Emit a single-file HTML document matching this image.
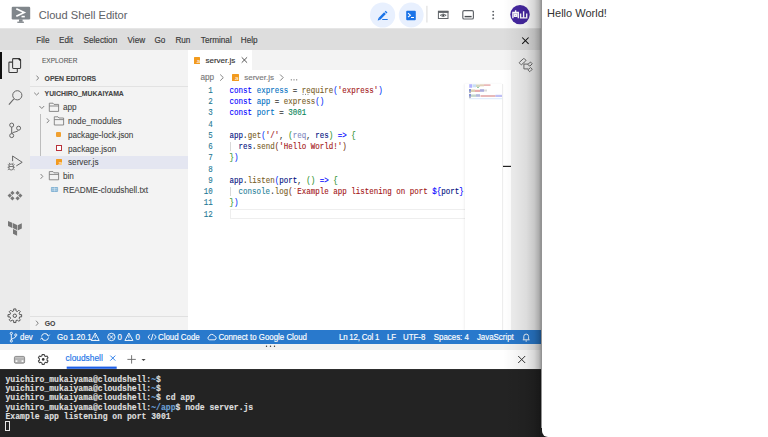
<!DOCTYPE html>
<html><head><meta charset="utf-8">
<style>
*{margin:0;padding:0;box-sizing:border-box}
html,body{width:768px;height:437px;overflow:hidden;background:#fff;font-family:"Liberation Sans",sans-serif}
svg{position:absolute;overflow:visible}
.t{position:absolute;white-space:nowrap;line-height:1;-webkit-text-stroke:0.15px currentColor}
#app{position:absolute;left:0;top:0;width:541px;height:437px;background:#fff;overflow:hidden}
#hdr{position:absolute;left:0;top:0;width:541px;height:29px;background:#fff;border-bottom:1px solid #e6e6e6}
#menu{position:absolute;left:0;top:29px;width:541px;height:21px;background:#dddddd}
#menu .t{top:7.7px;font-size:8.2px;color:#3a3a3a}
#act{position:absolute;left:0;top:50px;width:30px;height:280px;background:#ebebeb}
#side{position:absolute;left:30px;top:50px;width:158px;height:280px;background:#f3f3f3}
#side .t{font-size:8.2px;color:#424242;-webkit-text-stroke:0.08px currentColor}
#editor{position:absolute;left:188px;top:50px;width:323px;height:280px;background:#fff;overflow:hidden}
#tabbar{position:absolute;left:0;top:0;width:323px;height:20px;background:#f3f3f3}
#rstrip{position:absolute;left:511px;top:50px;width:30px;height:280px;background:#efefef}
#status{position:absolute;left:0;top:330px;width:541px;height:14px;background:#2979cc;color:#fff}
#status .t{top:3.8px;font-size:7.9px;transform:scaleY(1.15);transform-origin:0 5.5px}
#tbar{position:absolute;left:0;top:344px;width:541px;height:26px;background:#fff}
#term{position:absolute;left:0;top:369px;width:541px;height:68px;background:#232323;border-top:1px solid #2e2e2e}
#term .t{font-family:"Liberation Mono",monospace;font-size:8.1px;color:#e6e6e6;font-weight:bold;left:5.5px;color:#dedede;transform:scaleY(1.15);transform-origin:0 6px}
#right{position:absolute;left:541.5px;top:0;width:227px;height:437px;background:#fff;border-bottom-left-radius:6px}
#shade{position:absolute;left:503px;top:0;width:39px;height:437px;background:linear-gradient(to right,rgba(0,0,0,0) 0%,rgba(0,0,0,0.03) 30%,rgba(0,0,0,0.08) 60%,rgba(0,0,0,0.16) 80%,rgba(0,0,0,0.28) 92%,rgba(0,0,0,0.45) 100%)}
.code{position:absolute;left:41.6px;font-family:"Liberation Mono",monospace;font-size:7.5px;white-space:pre;line-height:1;color:#001080;-webkit-text-stroke:0.1px currentColor;transform:scaleY(1.22);transform-origin:0 5.6px}
.ln{position:absolute;font-family:"Liberation Mono",monospace;font-size:7.5px;line-height:1;color:#237893;text-align:right;width:24.8px;left:0;-webkit-text-stroke:0.08px currentColor;transform:scaleY(1.22);transform-origin:0 5.6px}
.k{color:#0000ff}.c{color:#0070c1}.f{color:#795e26}.s{color:#a31515}.n{color:#098658}.b1{color:#0431fa}.b2{color:#319331}.b3{color:#7b3814}.p{color:#333}.u{color:#8088bf}
.js{position:absolute;width:6.5px;height:6.5px;background:#f29b1e;border-radius:0.5px}
.js:after{content:"JS";position:absolute;right:0.3px;bottom:0;font-size:2.8px;color:#fff;font-weight:bold;line-height:1}
</style></head><body>
<div id="app">
  <div id="hdr">
    <svg style="left:0;top:0" width="40" height="29">
      <rect x="11.7" y="6.7" width="18.5" height="12.8" rx="1.2" fill="#80868b"/>
      <rect x="19" y="19.3" width="3.6" height="2.5" fill="#80868b"/>
      <rect x="17.3" y="21.6" width="6.6" height="1.3" fill="#80868b"/>
      <path d="M16.3 8.7 L24.2 12.4 L16.3 16.3" fill="none" stroke="#fff" stroke-width="1.7"/>
      <rect x="21.5" y="15.8" width="3.3" height="1.6" fill="#fff"/>
    </svg>
    <div class="t" style="left:38.7px;top:9.8px;font-size:11.1px;color:#5f6368;-webkit-text-stroke:0.05px #5f6368">Cloud Shell Editor</div>
    <svg style="left:0;top:0" width="541" height="29">
      <circle cx="382.6" cy="15" r="12.6" fill="#e8f0fe"/>
      <path d="M379.4 18.8 L385 13.2 M385.6 12.6 L386.6 11.6" stroke="#1a73e8" stroke-width="2.5"/><path d="M377.7 20.5 L378.4 18 L380.2 19.8Z" fill="#1a73e8"/>
      <rect x="382.2" y="19" width="5.5" height="1" fill="#1a73e8"/>
      <circle cx="411.2" cy="15" r="12.4" fill="#e8f0fe"/>
      <rect x="406.2" y="10.8" width="9.6" height="9.5" rx="1" fill="#1a73e8"/>
      <path d="M408 13.2 L410.4 15.2 L408 17.2" fill="none" stroke="#fff" stroke-width="1.1"/>
      <rect x="411" y="17" width="3" height="1" fill="#fff"/>
      <rect x="426.3" y="5.8" width="1.2" height="16.7" fill="#e0e0e0"/>
      <rect x="438.4" y="11.3" width="9.6" height="7.2" fill="none" stroke="#5f6368" stroke-width="1"/>
      <rect x="438" y="10.9" width="10.4" height="2" fill="#5f6368"/>
      <path d="M440.2 15.3 Q443.2 12.6 446.2 15.3 Q443.2 18 440.2 15.3Z" fill="none" stroke="#5f6368" stroke-width="0.85"/>
      <circle cx="443.2" cy="15.3" r="0.95" fill="#3c4043"/>
      <rect x="462.8" y="10.6" width="10.6" height="8.4" rx="1.3" fill="none" stroke="#5f6368" stroke-width="1.15"/>
      <rect x="464.6" y="15.9" width="7" height="1.4" fill="#4a4d51"/>
      <circle cx="493.2" cy="11.6" r="0.95" fill="#5f6368"/>
      <circle cx="493.2" cy="15" r="0.95" fill="#5f6368"/>
      <circle cx="493.2" cy="18.4" r="0.95" fill="#5f6368"/>
      <circle cx="520" cy="14.6" r="9.7" fill="#4527a0"/>
    </svg>
    <svg style="left:0;top:0" width="541" height="29" fill="none" stroke="#fff" stroke-width="1.4">
      <path d="M515.6 10.3 V12 M512.9 18.3 V12.5 H518.3 V18.3 M514.6 14.2 H516.6 V16.3 H514.6 Z"/>
      <path d="M523.6 11.3 V17.9 M520.6 13.6 V17.9 H526.7 V13.6"/>
    </svg>
  </div>
  <div id="menu">
    <div class="t" style="left:36.3px">File</div>
    <div class="t" style="left:59px">Edit</div>
    <div class="t" style="left:83.5px">Selection</div>
    <div class="t" style="left:127.5px">View</div>
    <div class="t" style="left:154.5px">Go</div>
    <div class="t" style="left:175.4px">Run</div>
    <div class="t" style="left:200.8px">Terminal</div>
    <div class="t" style="left:240.8px">Help</div>
    <svg style="left:0;top:0" width="541" height="21">
      <path d="M522.2 8.5 L528.6 14.9 M528.6 8.5 L522.2 14.9" stroke="#111" stroke-width="1.05"/>
    </svg>
  </div>
  <div id="act">
    <div style="position:absolute;left:0;top:2px;width:1.6px;height:27px;background:#111"></div>
    <svg style="left:0;top:0" width="30" height="280" fill="none" stroke="#555" stroke-width="1">
      <!-- explorer -->
      <path d="M13.4 8.6 H19.2 L20.6 10 V17.6 Q20.6 18.4 19.8 18.4 H13.4 Q12.6 18.4 12.6 17.6 V9.4 Q12.6 8.6 13.4 8.6 Z" stroke="#3a3a3a" stroke-width="1.05"/>
      <path d="M18.8 8.7 L20.5 10.4" stroke="#222" stroke-width="1.6"/>
      <path d="M12.6 12.1 H9.6 Q8.9 12.1 8.9 12.8 V21.7 Q8.9 22.4 9.6 22.4 H16.6 Q17.3 22.4 17.3 21.7 V18.4" stroke="#3a3a3a" stroke-width="1.05"/>
      <!-- search -->
      <circle cx="17.3" cy="45.3" r="4.6" stroke="#666"/>
      <path d="M13.9 48.8 L8.9 54.6" stroke="#666" stroke-width="1.05"/>
      <!-- scm -->
      <g stroke="#666"><circle cx="11.7" cy="75.1" r="2"/>
      <circle cx="11.7" cy="85.6" r="2"/>
      <circle cx="18.6" cy="78.2" r="2"/>
      <path d="M11.7 77.1 V83.6 M18.4 80.2 C17.8 82.3 12.5 81.5 11.9 83.7"/></g>
      <!-- run debug -->
      <path d="M12.6 111.2 V106 L22.2 112.3 L16.3 115.9" stroke="#666"/>
      <g stroke="#666" stroke-width="0.85"><path d="M9 116.2 Q9 114 11.2 114 Q13.4 114 13.4 116.2 V118 Q13.4 120 11.2 120 Q9 120 9 118 Z"/>
      <path d="M9 115.2 L7.8 114.5 M13.4 115.2 L14.6 114.5 M9 117.3 H7.6 M13.4 117.3 H14.8 M9 119 L7.8 119.8 M13.4 119 L14.6 119.8 M9.8 114.2 L9.2 112.8 M12.6 114.2 L13.2 112.8 M9 116.5 H13.4"/></g>
    </svg>
    <svg style="left:0;top:0" width="30" height="280" fill="#777">
      <!-- cloud code diamonds -->
      <path d="M12.4 140.75 L14.55 142.9 L12.4 145.05 L10.25 142.9Z M9.7 143.45 L11.85 145.6 L9.7 147.75 L7.55 145.6Z M12.4 146.15 L14.55 148.3 L12.4 150.45 L10.25 148.3Z M17.6 140.75 L19.75 142.9 L17.6 145.05 L15.45 142.9Z M20.3 143.45 L22.45 145.6 L20.3 147.75 L18.15 145.6Z M17.6 146.15 L19.75 148.3 L17.6 150.45 L15.45 148.3Z "/>
      <!-- terraform -->
      <path d="M8 170.9 L12.2 172.8 V177.9 L8 175.9Z M12.8 173.1 L17 175.1 V180 L12.8 178Z M17.6 175.3 L21.8 173.3 V178.5 L17.6 180.5Z M13 179.1 L17.1 181 V185.8 L13 183.8Z"/>
    </svg>
    <svg style="left:0;top:0" width="30" height="280" fill="none" stroke="#555" stroke-width="1">
      <path stroke-linejoin="round" d="M13.67 258.94 L15.93 258.94 L15.93 260.88 L17.45 261.51 L18.81 260.14 L20.41 261.74 L19.04 263.10 L19.67 264.62 L21.61 264.62 L21.61 266.88 L19.67 266.88 L19.04 268.40 L20.41 269.76 L18.81 271.36 L17.45 269.99 L15.93 270.62 L15.93 272.56 L13.67 272.56 L13.67 270.62 L12.15 269.99 L10.79 271.36 L9.19 269.76 L10.56 268.40 L9.93 266.88 L7.99 266.88 L7.99 264.62 L9.93 264.62 L10.56 263.10 L9.19 261.74 L10.79 260.14 L12.15 261.51 L13.67 260.88Z"/>
      <circle cx="14.8" cy="265.75" r="1.7"/>
    </svg>
  </div>
  <div id="side">
    <div class="t" style="left:12px;top:7.8px;font-size:6.5px;color:#555">EXPLORER</div>
    <svg style="left:0;top:0" width="158" height="280" fill="none" stroke="#777" stroke-width="0.9">
      <path d="M6.5 25.6 L8.6 28 L6.5 30.4"/>
      <path d="M4.2 42.7 L6.6 45 L9 42.7"/>
      <path d="M9.4 56 L11.8 58.5 L14.2 56"/>
      <path d="M16.8 68.3 L19 70.7 L16.8 73.1"/>
      <path d="M10.6 124 L12.8 126.4 L10.6 128.8"/>
      <path d="M6 270.7 L8.2 273.2 L6 275.7"/>
    </svg>
    <div style="position:absolute;left:0;top:36px;width:158px;height:1px;background:#e2e2e2"></div>
    <div class="t" style="left:14.6px;top:25.8px;font-size:6.85px;font-weight:bold;color:#444">OPEN EDITORS</div>
    <div class="t" style="left:14.6px;top:41.3px;font-size:6.85px;font-weight:bold;color:#444">YUICHIRO_MUKAIYAMA</div>
    <!-- folder icons -->
    <svg style="left:0;top:0" width="158" height="280" fill="none" stroke="#777" stroke-width="0.85">
      <path d="M19.3 53.2 H23 L24 54.4 H28.6 V61.4 H19.3 Z M19.3 56 H28.6"/>
      <path d="M24.3 66.8 H28 L29 68 H33.6 V75 H24.3 Z M24.3 69.6 H33.6"/>
      <path d="M19.3 121.6 H23 L24 122.8 H28.6 V129.8 H19.3 Z M19.3 124.4 H28.6"/>
    </svg>
    <div style="position:absolute;left:10.4px;top:64px;width:0.8px;height:55px;background:#bdbdbd"></div>
    <div style="position:absolute;left:0;top:105.9px;width:158px;height:13.4px;background:#e4e6f1"></div>
    <div class="t" style="left:33px;top:54.3px">app</div>
    <div class="t" style="left:38px;top:67.8px">node_modules</div>
    <div style="position:absolute;left:25.7px;top:81.7px;background:#f0a030;width:5.4px;height:5.4px;border-radius:1px"></div>
    <div class="t" style="left:37.9px;top:81.8px">package-lock.json</div>
    <div style="position:absolute;left:26.1px;top:95.4px;width:6px;height:5.6px;border:1.5px solid #b8313a;background:#fff"></div>
    <div class="t" style="left:38px;top:95.6px">package.json</div>
    <div class="js" style="left:25.8px;top:108.9px"></div>
    <div class="t" style="left:38px;top:109.3px">server.js</div>
    <div class="t" style="left:33px;top:123.3px">bin</div>
    <svg style="left:0;top:0" width="158" height="280">
      <rect x="20.9" y="136.9" width="7.2" height="5" rx="0.8" fill="#86b4d4"/>
      <path d="M21.6 138.6 H27.4 M21.6 140.2 H27.4 M24.5 137.4 V141.4" stroke="#d4e6f2" stroke-width="0.6"/>
    </svg>
    <div class="t" style="left:33px;top:137.1px">README-cloudshell.txt</div>
    <div style="position:absolute;left:0;top:266.4px;width:158px;height:1px;background:#e0e0e0"></div>
    <div class="t" style="left:14.7px;top:270.8px;font-size:6.9px;font-weight:bold;color:#444">GO</div>
  </div>
  <div id="editor">
    <div id="tabbar">
      <div style="position:absolute;left:0;top:0;width:64.4px;height:20px;background:#fff"></div>
      <div class="js" style="left:5.9px;top:7px"></div>
      <div class="t" style="left:17.5px;top:6.6px;font-size:8px;color:#333">server.js</div>
      <svg style="left:0;top:0" width="80" height="20"><path d="M53.7 7.3 L59.1 12.7 M59.1 7.3 L53.7 12.7" stroke="#444" stroke-width="0.9"/></svg>
    </div>
    <div class="t" style="left:12.5px;top:24.2px;font-size:8.2px;color:#7a7a7a">app</div>
    <svg style="left:0;top:0" width="120" height="40" fill="none" stroke="#777" stroke-width="0.9"><path d="M32.2 24.5 L35.3 27.6 L32.2 30.7 M92.1 24.5 L95.2 27.6 L92.1 30.7"/></svg><svg style="left:0;top:0" width="120" height="40" fill="#666"><circle cx="103.3" cy="29.8" r="0.65"/><circle cx="106" cy="29.8" r="0.65"/><circle cx="108.7" cy="29.8" r="0.65"/></svg>
    <div class="js" style="left:44.2px;top:24.3px"></div>
    <div class="t" style="left:56.2px;top:24.2px;font-size:8px;color:#7a7a7a">server.js</div>
    
    <!-- code -->
    <div class="ln" style="top:37.9px">1</div>
    <div class="ln" style="top:49.1px">2</div>
    <div class="ln" style="top:60.4px">3</div>
    <div class="ln" style="top:71.6px">4</div>
    <div class="ln" style="top:82.9px">5</div>
    <div class="ln" style="top:94.1px">6</div>
    <div class="ln" style="top:105.4px">7</div>
    <div class="ln" style="top:116.6px">8</div>
    <div class="ln" style="top:127.9px">9</div>
    <div class="ln" style="top:139.1px">10</div>
    <div class="ln" style="top:150.4px">11</div>
    <div class="ln" style="top:161.6px">12</div>
    <div style="position:absolute;left:41.6px;top:159.4px;width:240px;height:10px;border:1px solid #eeeeee;border-right:none"></div>
    <div style="position:absolute;left:42.2px;top:92px;width:0.8px;height:9px;background:#d8d8d8"></div>
    <div style="position:absolute;left:42.2px;top:137px;width:0.8px;height:9px;background:#d8d8d8"></div>
    <div class="code" style="top:37.9px"><span class="k">const</span> <span class="c">express</span> <span class="p">=</span> <span class="f">require</span><span class="b1">(</span><span class="s">'express'</span><span class="b1">)</span></div>
    <div class="code" style="top:49.1px"><span class="k">const</span> <span class="c">app</span> <span class="p">=</span> <span class="f">express</span><span class="b1">()</span></div>
    <div class="code" style="top:60.4px"><span class="k">const</span> <span class="c">port</span> <span class="p">=</span> <span class="n">3001</span></div>
    <div class="code" style="top:82.9px">app<span class="p">.</span><span class="f">get</span><span class="b1">(</span><span class="s">'/'</span><span class="p">,</span> <span class="b2">(</span><span class="u">req</span><span class="p">,</span> res<span class="b2">)</span> <span class="k">=&gt;</span> <span class="b2">{</span></div>
    <div class="code" style="top:94.1px">  res<span class="p">.</span><span class="f">send</span><span class="b3">(</span><span class="s">'Hello World!'</span><span class="b3">)</span></div>
    <div class="code" style="top:105.4px"><span class="b2">}</span><span class="b1">)</span></div>
    <div class="code" style="top:127.9px">app<span class="p">.</span><span class="f">listen</span><span class="b1">(</span>port<span class="p">,</span> <span class="b2">()</span> <span class="k">=&gt;</span> <span class="b2">{</span></div>
    <div class="code" style="top:139.1px">  <span style="color:#267f99">console</span><span class="p">.</span><span class="f">log</span><span class="b3">(</span><span class="s">`Example app listening on port </span><span class="k">${</span>port<span class="k">}</span></div>
    <div class="code" style="top:150.4px"><span class="b2">}</span><span class="b1">)</span></div>
    <svg style="left:0;top:0" width="200" height="60" fill="#666"><circle cx="115" cy="44.3" r="0.55"/><circle cx="117.5" cy="44.3" r="0.55"/><circle cx="120" cy="44.3" r="0.55"/></svg>
    <!-- minimap -->
    <div style="position:absolute;left:276.6px;top:34px;width:38px;height:246px;background:#fff;box-shadow:-1px 0 2px rgba(0,0,0,0.06)"></div>
    <svg style="left:0;top:0" width="323" height="280">
      <rect opacity="0.75" x="281.2" y="34.2" width="2.9" height="3.6" fill="#9a9aff"/>
      <rect opacity="0.75" x="284.5" y="34.3" width="3.5" height="3" fill="#b8d4f0"/>
      <rect opacity="0.75" x="288" y="34.5" width="4" height="2.5" fill="#c8c8a8"/>
      <rect opacity="0.75" x="289" y="37" width="2" height="1" fill="#70c090"/>
      <rect opacity="0.75" x="292" y="34.3" width="4" height="2" fill="#d8c0a0"/>
      <rect opacity="0.75" x="296" y="34.3" width="6.5" height="1.6" fill="#e09898"/>
      <rect opacity="0.75" x="281" y="39" width="2" height="2.8" fill="#6070c0"/>
      <rect opacity="0.75" x="283" y="39.5" width="4" height="2.5" fill="#d0c098"/>
      <rect opacity="0.75" x="287" y="39.8" width="5" height="2.2" fill="#e09090"/>
      <rect opacity="0.75" x="292" y="39.2" width="4" height="2.6" fill="#9090d0"/>
      <rect opacity="0.75" x="296" y="39.5" width="3" height="2" fill="#d0d0d0"/>
      <rect opacity="0.75" x="281" y="42.2" width="2" height="0.9" fill="#909090"/>
      <rect opacity="0.75" x="281" y="44" width="2" height="2.8" fill="#6070c0"/>
      <rect opacity="0.75" x="283" y="44.5" width="5" height="2.4" fill="#b0c8b8"/>
      <rect opacity="0.75" x="288" y="44.2" width="4" height="2.6" fill="#98a0d0"/>
      <rect opacity="0.75" x="292.5" y="45" width="15" height="2" fill="#e0a0a0"/>
      <rect opacity="0.75" x="307.5" y="44.8" width="6.5" height="2.2" fill="#a8a8f0"/>
      <rect opacity="0.75" x="281" y="47.2" width="2" height="0.9" fill="#909090"/>
      <rect opacity="0.75" x="281" y="48.2" width="33.4" height="1" fill="#cfe2fa"/>
      <rect x="314.3" y="34" width="0.8" height="246" fill="#e6e6e6"/>
      <rect x="315" y="115.8" width="8" height="1.2" fill="#222"/>
    </svg>
  </div>
  <div id="rstrip">
    <svg style="left:0;top:0" width="30" height="30" fill="none" stroke="#606060" stroke-width="0.9">
      <rect x="8.3" y="10" width="6.6" height="3.2" rx="0.6" transform="rotate(-42 11.6 11.6)"/>
      <rect x="17.8" y="12.3" width="2.6" height="3.6" rx="0.4" transform="rotate(45 19.1 14.1)"/>
      <rect x="17.8" y="17.8" width="2.6" height="3.6" rx="0.4" transform="rotate(45 19.1 19.6)"/>
      <path d="M12.9 13.8 V18.9 H17.2 M12.9 14.1 H17.2"/>
    </svg>
  </div>
  <div id="status">
    <svg style="left:0;top:0" width="541" height="14" fill="none" stroke="#fff" stroke-width="0.9">
      <circle cx="11.3" cy="3.4" r="1.1"/><circle cx="11.3" cy="11" r="1.1"/><circle cx="15.8" cy="5" r="1.1"/>
      <path d="M11.3 4.5 V9.9 M15.8 6.1 C15.8 8.5 11.5 8 11.3 9.9"/>
      <path d="M41.5 6.5 A3.5 3.5 0 0 1 48.3 6 M48.5 7.5 A3.5 3.5 0 0 1 41.7 8"/>
      <path d="M47 4.5 L48.5 6.3 L49.8 4.5 M40.5 9.5 L41.8 7.7 L43 9.5" stroke-width="0.7"/>
      <path d="M95.2 3 L99.2 10.5 H91.2 Z M95.2 5.2 V8 M95.2 9 V9.6"/>
      <circle cx="111.4" cy="7" r="3.7"/><path d="M109.6 5.2 L113.2 8.8 M113.2 5.2 L109.6 8.8"/>
      <path d="M128.9 3 L132.9 10.5 H124.9 Z M128.9 5.2 V8 M128.9 9 V9.6"/>
      <path d="M150 4.5 L148 7 L150 9.5 M154.2 4.5 L156.2 7 L154.2 9.5 M153 3.8 L151.2 10.2"/>
      <path d="M209.5 9.8 H215 A2 2 0 0 0 214.5 6 A3 3 0 0 0 209 6.4 A1.8 1.8 0 0 0 209.5 9.8Z"/>
      <path d="M522.8 9.8 H529.6 M523.8 9.6 V6.5 A2.4 2.4 0 0 1 528.6 6.5 V9.6 M525.5 11 H527" />
    </svg>
    <div class="t" style="left:20.1px">dev</div>
    <div class="t" style="left:57px">Go 1.20.1</div>
    <div class="t" style="left:117.5px">0</div>
    <div class="t" style="left:135.4px">0</div>
    <div class="t" style="left:158px">Cloud Code</div>
    <div class="t" style="left:218.4px">Connect to Google Cloud</div>
    <div class="t" style="left:339px;letter-spacing:-0.2px">Ln 12, Col 1</div>
    <div class="t" style="left:386.9px">LF</div>
    <div class="t" style="left:403px">UTF-8</div>
    <div class="t" style="left:433.8px">Spaces: 4</div>
    <div class="t" style="left:476.9px">JavaScript</div>
  </div>
  <div id="tbar">
    <div style="position:absolute;left:0;top:0;width:541px;height:5.5px;background:#f1f1f1"></div>
    <svg style="left:0;top:0" width="541" height="26">
      <circle cx="266.5" cy="2.3" r="0.7" fill="#333"/><circle cx="270.5" cy="2.3" r="0.7" fill="#333"/><circle cx="274.5" cy="2.3" r="0.7" fill="#333"/>
      <rect x="14.4" y="12.4" width="10.2" height="6.8" rx="1.3" fill="#b4b4b4" stroke="#7a7a7a" stroke-width="0.8"/>
      <rect x="15.6" y="16.3" width="1.8" height="1.6" fill="#fff"/><rect x="21.6" y="16.3" width="1.8" height="1.6" fill="#fff"/>
      <rect x="15.4" y="13.3" width="8.2" height="0.8" fill="#c8c8c8"/>

      <path stroke-linejoin="round" fill="none" stroke="#444" stroke-width="1.05" d="M42.19 10.40 L44.21 10.40 L44.37 11.68 L45.84 12.53 L47.03 12.03 L48.03 13.77 L47.01 14.55 L47.01 16.25 L48.03 17.03 L47.03 18.77 L45.84 18.27 L44.37 19.12 L44.21 20.40 L42.19 20.40 L42.03 19.12 L40.56 18.27 L39.37 18.77 L38.37 17.03 L39.39 16.25 L39.39 14.55 L38.37 13.77 L39.37 12.03 L40.56 12.53 L42.03 11.68Z"/>
      <circle cx="43.2" cy="15.4" r="1.3" fill="#333"/>
      <path d="M110.3 11.6 L115.3 16.6 M115.3 11.6 L110.3 16.6" stroke="#1a73e8" stroke-width="0.9"/>
      <rect x="66.7" y="22.6" width="50" height="2.2" fill="#1c5ee6"/>
      <path d="M131.6 11.2 V19.6 M127.4 15.4 H135.8" stroke="#666" stroke-width="0.9"/>
      <path d="M141.5 14.9 L145.6 14.9 L143.55 17Z" fill="#444"/>
      <path d="M518.2 12 L525.2 19 M525.2 12 L518.2 19" stroke="#333" stroke-width="1"/>
    </svg>
    <div class="t" style="left:65.6px;top:10.3px;font-size:8.4px;color:#1a73e8">cloudshell</div>
  </div>
  <div id="term">
    <div class="t" style="top:5.5px">yuichiro_mukaiyama@cloudshell:<span style="color:#6b9fd6">~</span>$</div>
    <div class="t" style="top:14.8px">yuichiro_mukaiyama@cloudshell:<span style="color:#6b9fd6">~</span>$</div>
    <div class="t" style="top:24.2px">yuichiro_mukaiyama@cloudshell:<span style="color:#6b9fd6">~</span>$ cd app</div>
    <div class="t" style="top:33.5px">yuichiro_mukaiyama@cloudshell:<span style="color:#6b9fd6">~/app</span>$ node server.js</div>
    <div class="t" style="top:42.9px">Example app listening on port 3001</div>
    <div style="position:absolute;left:5.2px;top:51.3px;width:5px;height:10px;border:1px solid #e6e6e6"></div>
  </div>
</div>
<div id="shade"></div>
<div style="position:absolute;left:540px;top:428px;width:10px;height:9px;background:#1e1e1e"></div>
<div id="right">
  <div class="t" style="left:5.6px;top:7.6px;font-size:11px;color:#333;-webkit-text-stroke:0">Hello World!</div>
</div>
</body></html>
